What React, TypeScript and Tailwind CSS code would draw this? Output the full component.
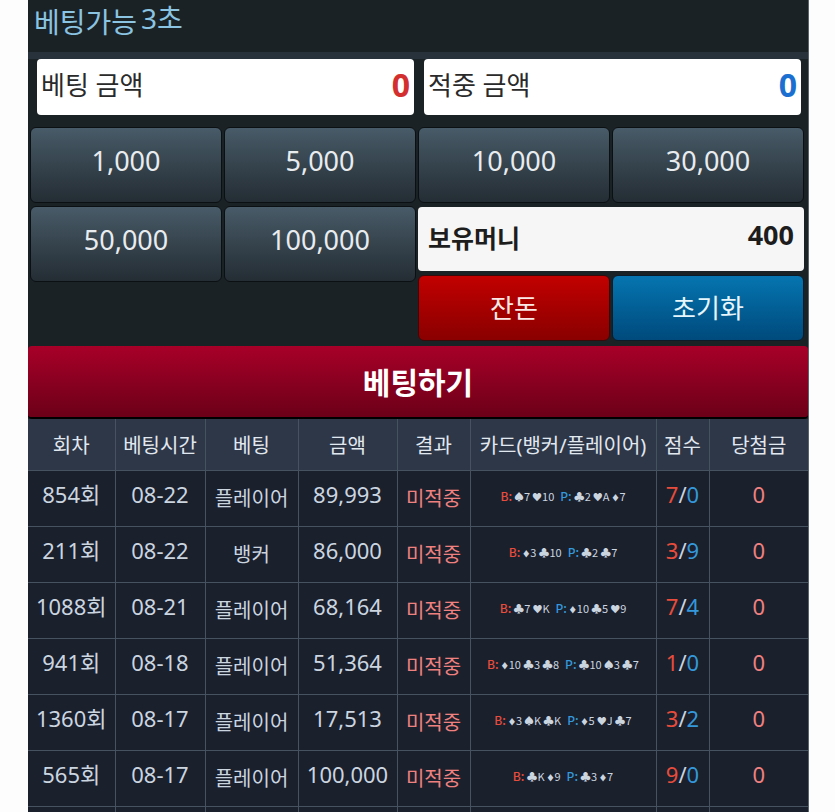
const CHIPS_TOP = ["1,000", "5,000", "10,000", "30,000"];
const CHIPS_BOTTOM = ["50,000", "100,000"];

type Bet = {
  round: string;
  date: string;
  pick: string;
  amount: string;
  banker: string;
  player: string;
  score: [number, number];
};

const BETS: Bet[] = [
  { round: "854회", date: "08-22", pick: "플레이어", amount: "89,993", banker: "♠7 ♥10", player: "♣2 ♥A ♦7", score: [7, 0] },
  { round: "211회", date: "08-22", pick: "뱅커", amount: "86,000", banker: "♦3 ♣10", player: "♣2 ♣7", score: [3, 9] },
  { round: "1088회", date: "08-21", pick: "플레이어", amount: "68,164", banker: "♣7 ♥K", player: "♦10 ♣5 ♥9", score: [7, 4] },
  { round: "941회", date: "08-18", pick: "플레이어", amount: "51,364", banker: "♦10 ♣3 ♣8", player: "♣10 ♠3 ♣7", score: [1, 0] },
  { round: "1360회", date: "08-17", pick: "플레이어", amount: "17,513", banker: "♦3 ♠K ♣K", player: "♦5 ♥J ♣7", score: [3, 2] },
  { round: "565회", date: "08-17", pick: "플레이어", amount: "100,000", banker: "♣K ♦9", player: "♣3 ♦7", score: [9, 0] },
];

const COLUMNS = [
  { label: "회차", width: "w-[87px]" },
  { label: "베팅시간", width: "w-[90px]" },
  { label: "베팅", width: "w-[93px]" },
  { label: "금액", width: "w-[99px]" },
  { label: "결과", width: "w-[73px]" },
  { label: "카드(뱅커/플레이어)", width: "w-[186px]" },
  { label: "점수", width: "w-[53px]" },
  { label: "당첨금", width: "w-[99px]" },
];

const SUIT_SIZE: Record<string, string> = {
  "♣": "text-[11px]",
  "♠": "text-[10px]",
  "♥": "text-[10px]",
  "♦": "text-[8px]",
};

const numberCell = "pb-2 text-[22px]";
const wordCell = "pt-0.5 text-[20px]";

function ChipButton({ value }: { value: string }) {
  return (
    <button
      type="button"
      className="h-[76px] rounded-md border border-[#0b1013] bg-linear-to-b from-[#485b68] to-[#242d34] pb-2 text-[27px] text-[#e8ecef]"
    >
      {value}
    </button>
  );
}

function AmountField({ id, label, color }: { id: string; label: string; color: string }) {
  return (
    <div className="flex h-14 min-w-0 items-center rounded-sm bg-white pr-1 pb-1 pl-1">
      <label htmlFor={id} className="shrink-0 text-[26px] text-[#2a2a2a]">
        {label}
      </label>
      <input
        id={id}
        readOnly
        defaultValue="0"
        className={`h-12 w-full min-w-0 bg-transparent text-right text-[32px] font-bold outline-none ${color}`}
      />
    </div>
  );
}

function Hand({ cards }: { cards: string }) {
  return (
    <>
      {cards.split(" ").map((card) => (
        <span key={card} className="ml-0.5">
          <span className={SUIT_SIZE[card[0]]}>{card[0]}</span>
          {card.slice(1)}
        </span>
      ))}
    </>
  );
}

export default function App() {
  return (
    <div className="h-screen overflow-hidden bg-[#fdfdfd] pr-[26px] pl-7 font-['Noto_Sans','Noto_Sans_CJK_KR',sans-serif]">
      <div className="border-r border-[#5b646c] bg-[#1b2225]">
        {/* Status line */}
        <div className="flex h-[52px] items-start gap-1 pl-1.5 text-[28px] leading-9 text-[#8ac4e2]">
          <span className="pt-1">베팅가능</span>
          <span>3초</span>
        </div>
        <div className="h-[7px] bg-[#27323a]" />

        <div className="grid grid-cols-2 gap-2.5 pr-[7px] pl-[9px]">
          <AmountField id="bet" label="베팅 금액" color="text-[#d32f2f]" />
          <AmountField id="win" label="적중 금액" color="text-[#1b6fd0]" />
        </div>

        {/* Chips */}
        <div className="grid grid-cols-4 gap-0.5 pt-3 pr-1 pl-0.5">
          {CHIPS_TOP.map((c) => (
            <ChipButton key={c} value={c} />
          ))}
        </div>
        <div className="grid grid-cols-2 gap-0.5 pt-[3px] pr-1 pb-[5px] pl-0.5">
          <div className="grid grid-cols-2 content-start gap-0.5">
            {CHIPS_BOTTOM.map((c) => (
              <ChipButton key={c} value={c} />
            ))}
          </div>
          <div className="pt-px">
            <div className="flex h-16 items-center justify-between rounded-sm bg-[#f6f6f6] pr-2.5 pl-2.5 font-bold text-[#1d1d1d]">
              <span className="text-[25px]">보유머니</span>
              <span className="pb-2 text-[27px]">400</span>
            </div>
            <div className="grid grid-cols-2 gap-0.5 pt-1">
              <button
                type="button"
                className="h-[66px] rounded-md border border-[#3a0a0a] bg-linear-to-b from-[#c20000] to-[#8a0000] text-[26px] text-[#fbe9e7]"
              >
                잔돈
              </button>
              <button
                type="button"
                className="h-[66px] rounded-md border border-[#0c1c28] bg-linear-to-b from-[#0675b0] to-[#004a7c] text-[26px] text-[#e6f6fc]"
              >
                초기화
              </button>
            </div>
          </div>
        </div>

        <button
          type="button"
          className="block h-[73px] w-full rounded-sm border-b-2 border-black bg-linear-to-b from-[#a80028] to-[#6c0018] pt-0.5 text-[30px] font-bold text-white"
        >
          베팅하기
        </button>

        {/* History */}
        <table className="w-full table-fixed border-collapse bg-[#1a202c] text-center text-[#cbd5e0]">
          <thead>
            <tr className="h-[51px] bg-[#2d3748]">
              {COLUMNS.map((c) => (
                <th
                  key={c.label}
                  className={`border-r border-b border-[#465260] p-0 pt-1 text-[20px] font-normal whitespace-nowrap text-[#e2e8f0] last:border-r-0 ${c.width}`}
                >
                  {c.label}
                </th>
              ))}
            </tr>
          </thead>
          <tbody className="[&_td]:border-r [&_td]:border-b [&_td]:border-[#465260] [&_td]:whitespace-nowrap [&_td:last-child]:border-r-0">
            {BETS.map((b) => (
              <tr key={b.round} className="h-14">
                <td className={numberCell}>{b.round}</td>
                <td className={numberCell}>{b.date}</td>
                <td className={wordCell}>{b.pick}</td>
                <td className={numberCell}>{b.amount}</td>
                <td className={`${wordCell} text-[#f08080]`}>미적중</td>
                <td className="pb-1 font-['Noto_Sans_CJK_KR',sans-serif] text-[11px]">
                  <span className="text-[12px] font-medium text-[#e74c3c]">B:</span>
                  <Hand cards={b.banker} />
                  <span className="ml-1.5 text-[12px] font-medium text-[#3498db]">P:</span>
                  <Hand cards={b.player} />
                </td>
                <td className={numberCell}>
                  <span className="text-[#e74c3c]">{b.score[0]}</span>/
                  <span className="text-[#3498db]">{b.score[1]}</span>
                </td>
                <td className={`${numberCell} text-[#f08080]`}>0</td>
              </tr>
            ))}
            <tr className="h-14">
              {COLUMNS.map((c) => (
                <td key={c.label} />
              ))}
            </tr>
          </tbody>
        </table>
      </div>
    </div>
  );
}
